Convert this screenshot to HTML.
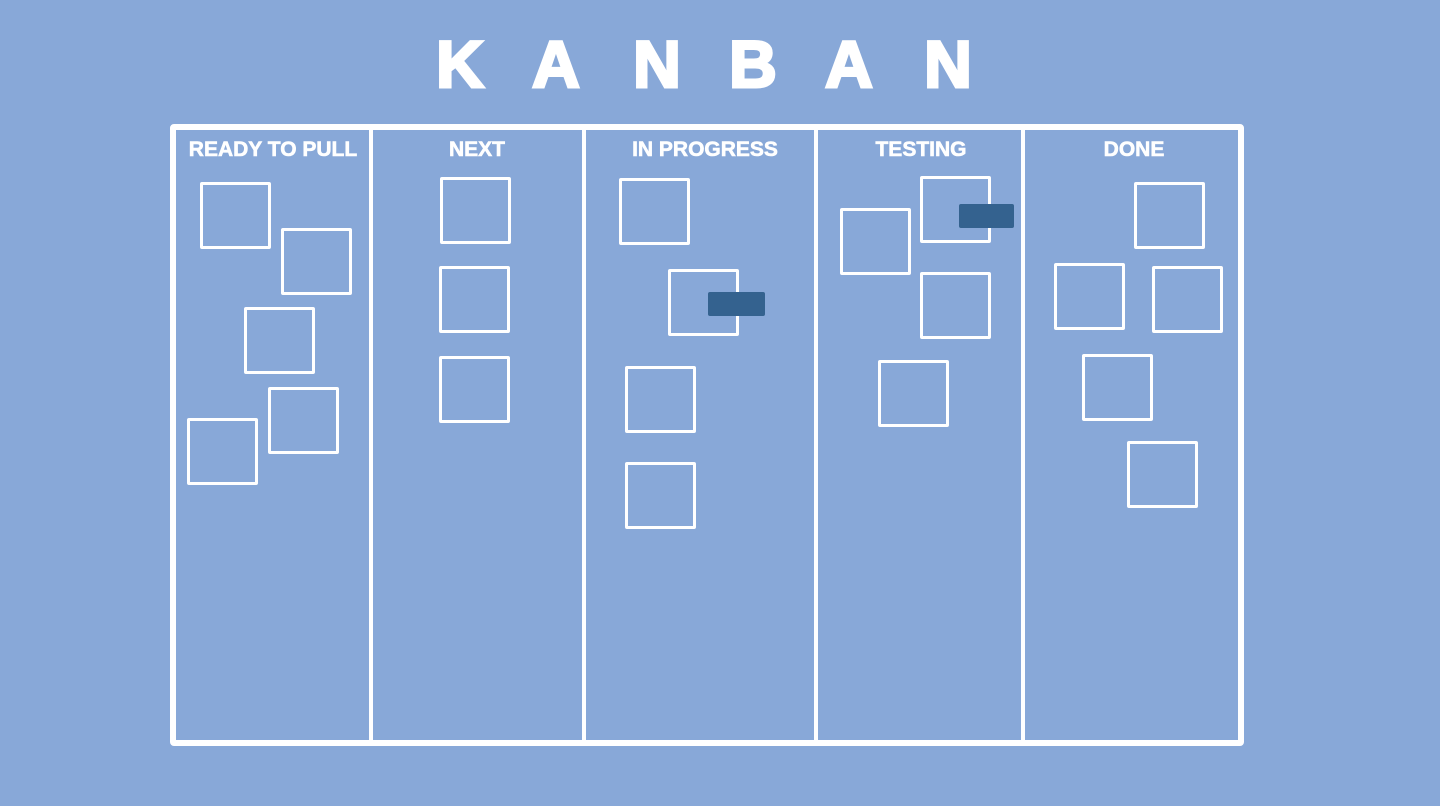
<!DOCTYPE html>
<html><head><style>
body{margin:0;width:1440px;height:806px;background:#88a8d8;position:relative;overflow:hidden;font-family:"Liberation Sans",sans-serif;}
.L{position:absolute;top:24px;width:80px;margin-left:-40px;text-align:center;color:#fff;font-weight:900;font-size:66px;line-height:80px;-webkit-text-stroke:3px #fff;}
.board{position:absolute;left:170px;top:124px;width:1062px;height:610px;border:6px solid #fff;border-radius:4px;}
.d{position:absolute;top:124px;width:4px;height:622px;background:#fff;}
.h{position:absolute;top:138px;width:220px;margin-left:-110px;text-align:center;color:#fff;font-weight:bold;font-size:21px;line-height:24px;-webkit-text-stroke:0.6px #fff;}
.b{position:absolute;width:65px;height:61px;border:3px solid #fff;border-radius:2px;}
.t{position:absolute;background:#34628f;border-radius:2px;}
</style></head><body>
<div class="L" style="left:460px">K</div>
<div class="L" style="left:556px">A</div>
<div class="L" style="left:657px">N</div>
<div class="L" style="left:753px">B</div>
<div class="L" style="left:849px">A</div>
<div class="L" style="left:948px">N</div>
<div class="board"></div>
<div class="d" style="left:369px"></div>
<div class="d" style="left:582px"></div>
<div class="d" style="left:814px"></div>
<div class="d" style="left:1021px"></div>
<div class="h" style="left:273px">READY TO PULL</div>
<div class="h" style="left:477px">NEXT</div>
<div class="h" style="left:705px">IN PROGRESS</div>
<div class="h" style="left:921px">TESTING</div>
<div class="h" style="left:1134px">DONE</div>
<div class="b" style="left:200px;top:182px"></div>
<div class="b" style="left:281px;top:228px"></div>
<div class="b" style="left:244px;top:307px"></div>
<div class="b" style="left:268px;top:387px"></div>
<div class="b" style="left:187px;top:418px"></div>
<div class="b" style="left:440px;top:177px"></div>
<div class="b" style="left:439px;top:266px"></div>
<div class="b" style="left:439px;top:356px"></div>
<div class="b" style="left:619px;top:178px"></div>
<div class="b" style="left:668px;top:269px"></div>
<div class="b" style="left:625px;top:366px"></div>
<div class="b" style="left:625px;top:462px"></div>
<div class="b" style="left:840px;top:208px"></div>
<div class="b" style="left:920px;top:176px"></div>
<div class="b" style="left:920px;top:272px"></div>
<div class="b" style="left:878px;top:360px"></div>
<div class="b" style="left:1134px;top:182px"></div>
<div class="b" style="left:1054px;top:263px"></div>
<div class="b" style="left:1152px;top:266px"></div>
<div class="b" style="left:1082px;top:354px"></div>
<div class="b" style="left:1127px;top:441px"></div>
<div class="t" style="left:708px;top:292px;width:57px;height:24px"></div>
<div class="t" style="left:959px;top:204px;width:55px;height:24px"></div>
</body></html>
